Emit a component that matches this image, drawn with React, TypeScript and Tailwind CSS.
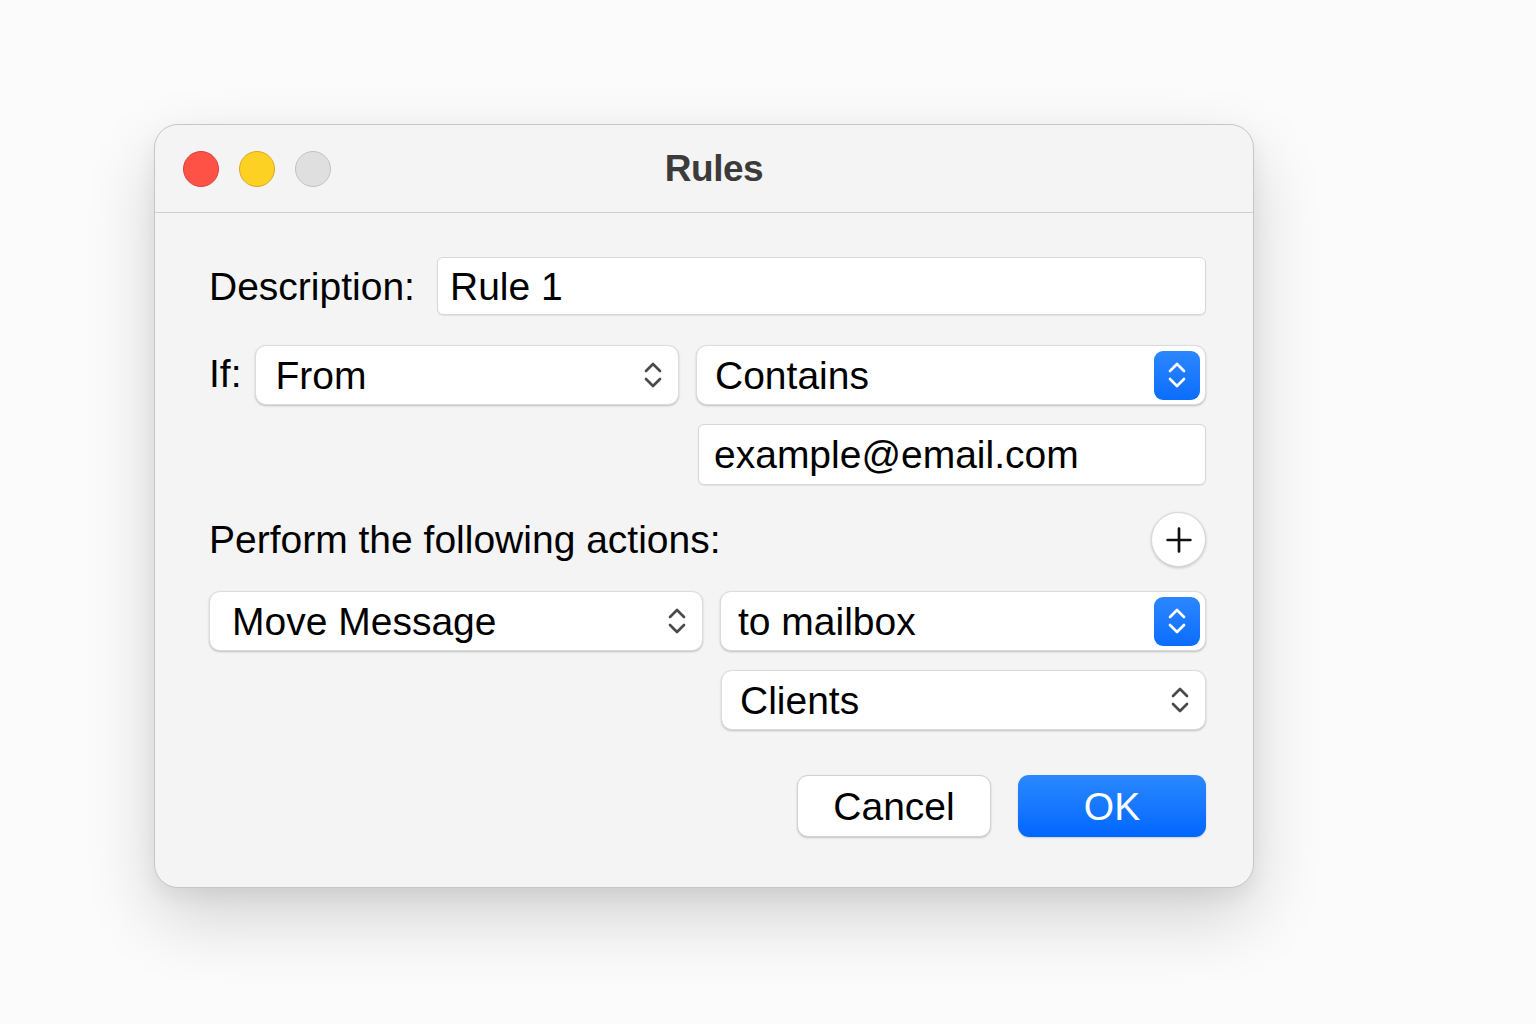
import React from 'react'

// macOS-style "Rules" sheet: description field, a condition row and one action.

const FONT = { fontFamily: '"Liberation Sans", Arial, sans-serif' }

function Chevrons({ className }: { className?: string }) {
  return (
    <svg viewBox="0 0 20 30" className={className} fill="none" stroke="currentColor" strokeWidth={2.7} strokeLinecap="round" strokeLinejoin="round">
      <path d="M3 11 L10 4 L17 11" />
      <path d="M3 19 L10 26 L17 19" />
    </svg>
  )
}

function Select({ label, width, pad, blue }: { label: string; width: string; pad: string; blue?: boolean }) {
  return (
    <div className={`${width} h-[60px] flex items-center justify-between bg-white rounded-[11px] border border-[#dcdcdc] shadow-[0_1px_2px_rgba(0,0,0,0.22)]`}>
      <span className={`${pad} text-[39px] leading-none text-black`}>{label}</span>
      {blue ? (
        <div className="mr-[5px] w-[46px] h-[49px] rounded-[9px] bg-gradient-to-b from-[#2b86ff] to-[#0a6dfc] flex items-center justify-center text-white">
          <Chevrons className="w-[20px] h-[30px]" />
        </div>
      ) : (
        <Chevrons className="mr-[15px] w-[20px] h-[30px] text-[#4a4a4a]" />
      )}
    </div>
  )
}

function TextField({ value, width, pad, height }: { value: string; width: string; pad: string; height: string }) {
  return (
    <div className={`${width} ${height} flex items-center bg-white rounded-[6px] border border-[#d8d8d8] shadow-[0_1px_1px_rgba(0,0,0,0.08)]`}>
      <span className={`${pad} text-[39px] leading-none text-black`}>{value}</span>
    </div>
  )
}

export default function App() {
  return (
    <div className="min-h-screen w-full bg-[#fbfbfb] pl-[154px] pt-[124px]" style={FONT}>
      <div className="w-[1100px] h-[764px] rounded-[24px] bg-[#f4f4f4] border border-[#c6c6c6] shadow-[0_30px_70px_rgba(0,0,0,0.16),0_8px_20px_rgba(0,0,0,0.06)] flex flex-col">
        {/* Title bar */}
        <div className="relative h-[88px] border-b border-[#cfcfcf] flex items-center pl-[28px] gap-[20px]">
          <span className="w-[36px] h-[36px] rounded-full bg-[#fe5247] border border-[#d9403a]" />
          <span className="w-[36px] h-[36px] rounded-full bg-[#fdd024] border border-[#d8a820]" />
          <span className="w-[36px] h-[36px] rounded-full bg-[#dfdfdf] border border-[#c2c2c2]" />
          <div className="absolute inset-0 flex items-center justify-center pl-[20px] pointer-events-none">
            <span className="text-[37px] font-bold text-[#3b3b3b] tracking-[-0.5px]">Rules</span>
          </div>
        </div>

        {/* Body */}
        <div className="flex flex-col pl-[54px] pr-[47px] pt-[44px]">
          <div className="flex items-center justify-between">
            <span className="text-[39px] leading-none text-black">Description:</span>
            <TextField value="Rule 1" width="w-[769px]" height="h-[58px]" pad="pl-[12px]" />
          </div>

          <div className="mt-[30px] flex items-start justify-between">
            <div className="flex items-start">
              <span className="text-[39px] leading-none text-black pt-[9px]">If:</span>
              <div className="ml-[13px]">
                <Select label="From" width="w-[424px]" pad="pl-[20px]" />
              </div>
            </div>
            <Select label="Contains" width="w-[510px]" pad="pl-[18px]" blue />
          </div>

          <div className="mt-[19px] flex justify-end">
            <TextField value="example@email.com" width="w-[508px]" height="h-[61px]" pad="pl-[15px]" />
          </div>

          <div className="mt-[27px] flex items-center justify-between">
            <span className="text-[39px] leading-none text-black">Perform the following actions:</span>
            <button className="w-[55px] h-[55px] rounded-full bg-white border border-[#d6d6d6] shadow-[0_1px_3px_rgba(0,0,0,0.2)] flex items-center justify-center">
              <svg viewBox="0 0 24 24" className="w-[26px] h-[26px]" fill="none" stroke="#111" strokeWidth={2.5} strokeLinecap="round">
                <path d="M12 1.5 V22.5 M1.5 12 H22.5" />
              </svg>
            </button>
          </div>

          <div className="mt-[24px] flex justify-between">
            <Select label="Move Message" width="w-[494px]" pad="pl-[22px]" />
            <Select label="to mailbox" width="w-[486px]" pad="pl-[17px]" blue />
          </div>

          <div className="mt-[19px] flex justify-end">
            <Select label="Clients" width="w-[485px]" pad="pl-[18px]" />
          </div>

          <div className="mt-[45px] flex justify-end gap-[27px]">
            <button className="w-[194px] h-[62px] rounded-[11px] bg-white border border-[#d2d2d2] shadow-[0_1px_2px_rgba(0,0,0,0.2)] text-[39px] leading-none text-black">
              Cancel
            </button>
            <button className="w-[188px] h-[62px] rounded-[11px] bg-gradient-to-b from-[#2a88ff] to-[#0066ff] shadow-[0_1px_2px_rgba(0,0,0,0.15)] text-[39px] leading-none text-white">
              OK
            </button>
          </div>
        </div>
      </div>
    </div>
  )
}
